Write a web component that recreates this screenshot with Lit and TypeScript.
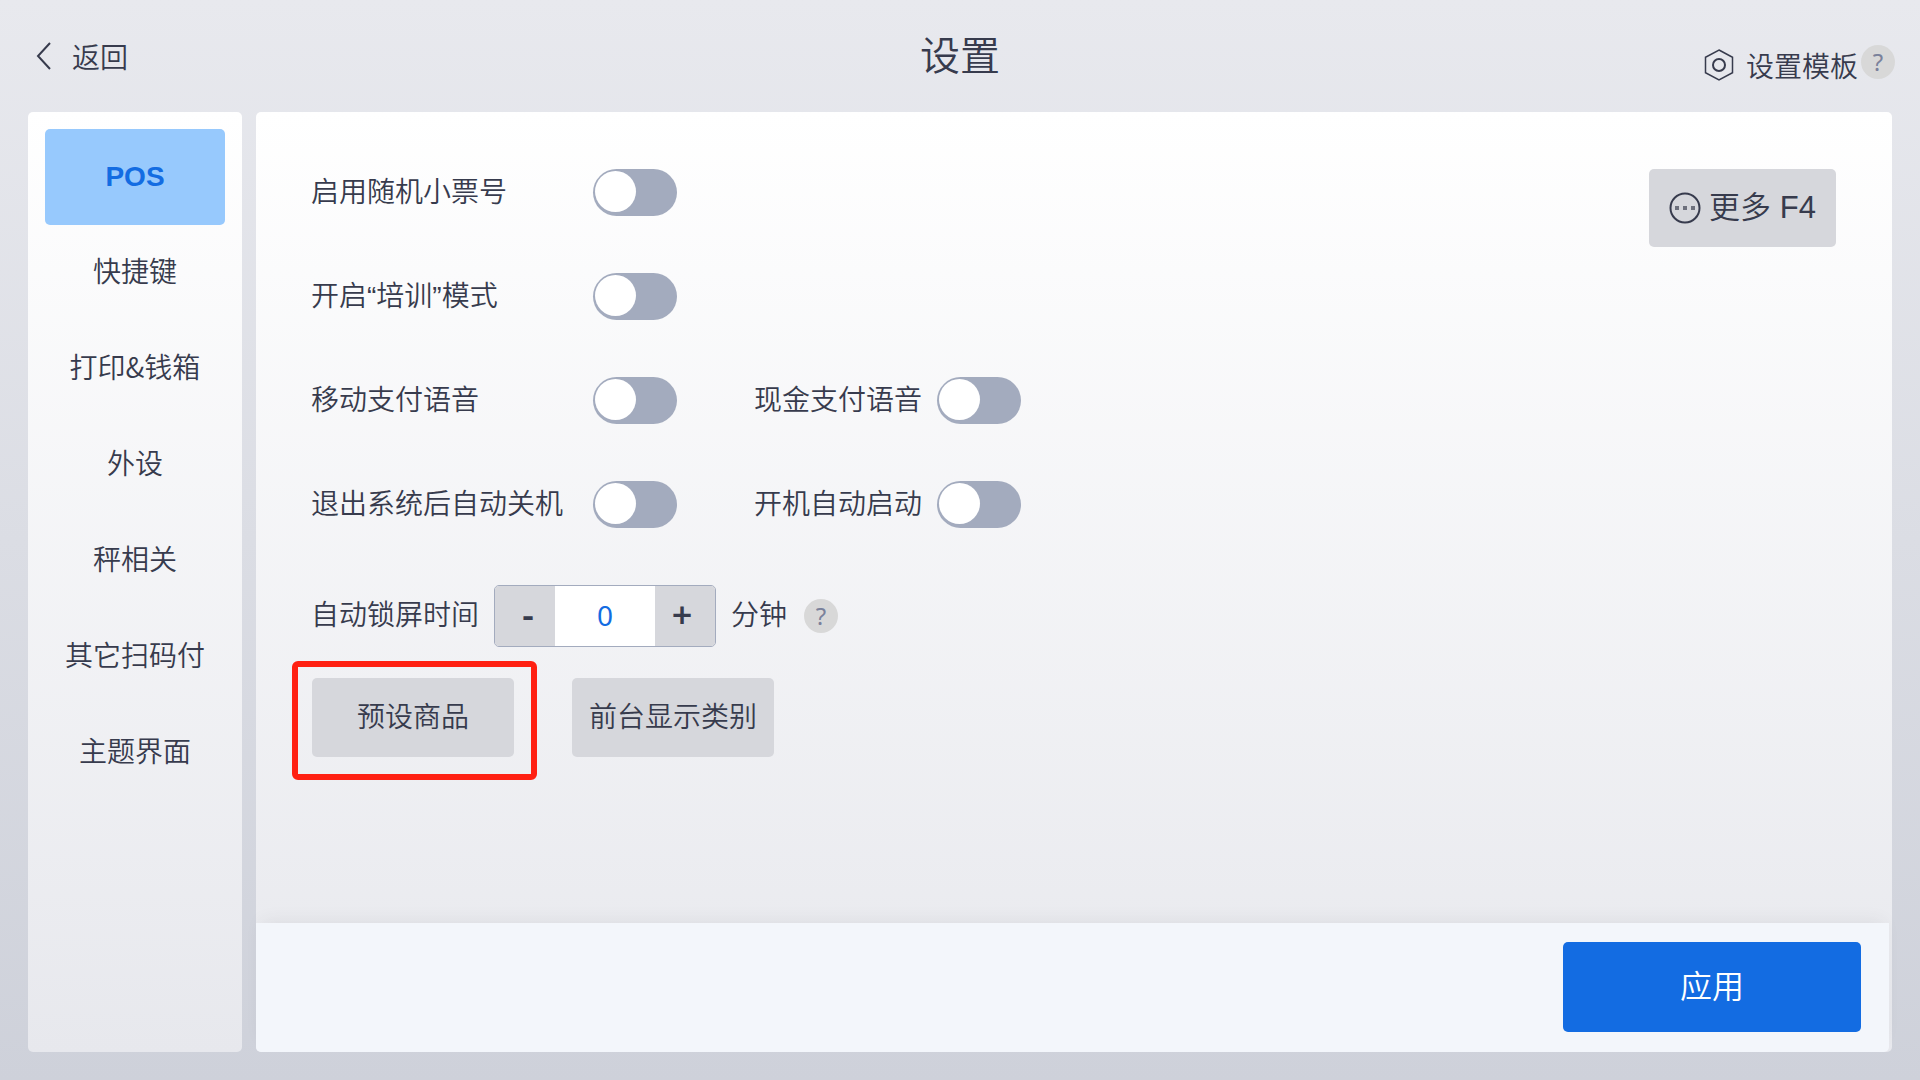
import { LitElement, html, css } from "lit";
import { customElement, property, state } from "lit/decorators.js";
import { classMap } from "lit/directives/class-map.js";

const FONT = css`"Liberation Sans", "Noto Sans CJK SC", sans-serif`;
const CJK_FONT = css`"Noto Sans CJK SC", sans-serif`;

@customElement("toggle-switch")
class ToggleSwitch extends LitElement {
  @property() label = "";
  @property({ type: Boolean }) checked = false;

  static styles = css`
    :host {
      display: contents;
    }
    .label {
      color: #373b4d;
      font: 350 28px/48px ${FONT};
      white-space: nowrap;
    }
    .switch {
      appearance: none;
      box-sizing: border-box;
      flex: none;
      width: 84px;
      height: 47px;
      margin: 0;
      padding: 2px;
      border-radius: 24px;
      background: #a3abbe;
      cursor: pointer;
    }
    .switch::before {
      content: "";
      display: block;
      width: 41px;
      height: 41px;
      border-radius: 50%;
      background: #fff;
    }
    .switch:checked {
      background: #136ce2;
    }
    .switch:checked::before {
      margin-left: auto;
    }
  `;

  render() {
    return html`
      <label class="label" for="switch">${this.label}</label>
      <input
        class="switch"
        id="switch"
        type="checkbox"
        role="switch"
        .checked=${this.checked}
        @change=${(e: Event) => (this.checked = (e.target as HTMLInputElement).checked)}
      />
    `;
  }
}

@customElement("app-root")
class AppRoot extends LitElement {
  @state() private section = "POS";
  @state() private minutes = 0;

  private sections = ["POS", "快捷键", "打印&钱箱", "外设", "秤相关", "其它扫码付", "主题界面"];

  private rows = [
    ["启用随机小票号"],
    ["开启“培训”模式"],
    ["移动支付语音", "现金支付语音"],
    ["退出系统后自动关机", "开机自动启动"],
  ];

  static styles = css`
    :host {
      display: flex;
      flex-direction: column;
      box-sizing: border-box;
      min-height: 100vh;
      padding: 0 28px 28px;
      background: linear-gradient(#e8e9ee, #ced1da);
      color: #373b4d;
      font: 350 28px/40px ${FONT};
    }
    button {
      margin: 0;
      padding: 0;
      border: 0;
      border-radius: 5px;
      background: #d6d7dc;
      color: inherit;
      font: inherit;
      cursor: pointer;
    }
    svg {
      display: block;
      flex: none;
      fill: none;
      stroke: currentColor;
      stroke-width: 2;
    }

    .header {
      display: grid;
      grid-template-columns: 1fr auto 1fr;
      align-items: center;
      height: 112px;
    }
    .back {
      display: flex;
      align-items: center;
      justify-self: start;
      gap: 21px;
      padding-left: 8px;
      color: inherit;
      font-family: ${CJK_FONT};
      text-decoration: none;
    }
    .title {
      margin: 0;
      font-size: 40px;
      font-weight: 350;
      line-height: 56px;
    }
    .template {
      display: flex;
      align-items: center;
      justify-self: end;
      gap: 3px;
      margin: 18px -3px 0 0;
    }
    .template-link {
      display: flex;
      align-items: center;
      gap: 12px;
      background: none;
      font-family: ${CJK_FONT};
    }
    .template .help {
      margin-bottom: 6px;
    }
    .help {
      width: 34px;
      height: 34px;
      border-radius: 50%;
      background: #d8d8d8;
      color: #7a819b;
      font: 24px/32px "Noto Sans", sans-serif;
    }

    .body {
      display: flex;
      flex: 1;
      gap: 14px;
    }
    .nav {
      flex: none;
      box-sizing: border-box;
      width: 214px;
      padding: 17px;
      border-radius: 5px;
      background: linear-gradient(#fff, #e7e8ed);
    }
    .nav-item {
      display: block;
      width: 100%;
      height: 96px;
      padding-bottom: 6px;
      background: none;
      font-family: ${CJK_FONT};
    }
    .nav-item.active {
      padding: 0;
      background: #97c9fd;
      color: #136ce2;
      font-family: ${FONT};
      font-weight: 700;
    }

    .panel {
      display: flex;
      flex: 1;
      flex-direction: column;
      min-width: 0;
      border-radius: 5px;
      background: linear-gradient(#fff, #e7e8ed);
    }
    .content {
      display: flex;
      flex: 1;
      align-items: flex-start;
      justify-content: space-between;
      padding: 57px 56px 57px 55px;
    }
    .more {
      display: flex;
      align-items: center;
      justify-content: center;
      gap: 8px;
      width: 187px;
      height: 78px;
      font-size: 31px;
    }
    .toggles {
      display: grid;
      grid-template-columns: 282px 84px auto;
      grid-auto-rows: 47px;
      row-gap: 57px;
      justify-content: start;
    }
    .row {
      display: contents;
    }
    .second {
      display: flex;
      gap: 15px;
      margin-left: 77px;
    }
    .lock {
      display: flex;
      align-items: center;
      gap: 15px;
      margin-top: 57px;
    }
    .lock .help {
      margin-left: 2px;
    }
    .stepper {
      display: flex;
      box-sizing: border-box;
      width: 222px;
      height: 62px;
      border: 1px solid #a3abbe;
      border-radius: 5px;
      overflow: hidden;
    }
    .step {
      width: 60px;
      padding: 0 0 2px 6px;
      border-radius: 0;
      font: 600 36px/56px "Noto Sans", sans-serif;
    }
    .step:last-child {
      padding: 0 6px 2px 0;
    }
    .value {
      flex: 1;
      min-width: 0;
      padding: 0 0 3px;
      border: 0;
      background: #fff;
      color: #136ce2;
      font: 28px/56px "Noto Sans", sans-serif;
      text-align: center;
    }
    .actions {
      display: flex;
      gap: 58px;
      margin: 31px 0 0 1px;
    }
    .action {
      width: 202px;
      height: 79px;
    }
    .marked {
      position: relative;
      display: flex;
    }
    .marked::after {
      content: "";
      position: absolute;
      inset: -17px -23px -23px -20px;
      border: 6px solid #ff2012;
      border-radius: 6px;
      pointer-events: none;
    }
    .footer {
      display: flex;
      justify-content: flex-end;
      margin-right: 3px;
      padding: 19px 28px 20px;
      border-radius: 0 0 5px 5px;
      background: #f3f6fb;
      box-shadow: 0 -8px 16px -6px rgba(60, 60, 70, 0.08);
    }
    .apply {
      width: 298px;
      height: 90px;
      background: #136ce2;
      color: #fff;
      font-size: 32px;
    }
  `;

  render() {
    return html`
      <header class="header">
        <a class="back" href="#">
          <svg width="15" height="28" viewBox="0 0 15 28"><path d="M14 1 2 14l12 13" /></svg>
          返回
        </a>
        <h1 class="title">设置</h1>
        <div class="template">
          <button class="template-link">
            <svg width="30" height="32" viewBox="0 0 30 32">
              <path d="M15 1 28.500 8.300v15.400L15 31 1.500 23.700V8.300z" stroke-width="1.500" />
              <circle cx="15" cy="16" r="6" />
            </svg>
            设置模板
          </button>
          <button class="help" aria-label="设置模板">?</button>
        </div>
      </header>
      <div class="body">
        <nav class="nav">
          ${this.sections.map(
            (name) => html`<button
              class=${classMap({ "nav-item": true, active: name === this.section })}
              @click=${() => (this.section = name)}
            >${name}</button>`
          )}
        </nav>
        <main class="panel">
          <div class="content">
            <div>
              <div class="toggles">
                ${this.rows.map(
                  ([first, second]) => html`<div class="row">
                    <toggle-switch label=${first}></toggle-switch>
                    <div class="second">
                      ${second ? html`<toggle-switch label=${second}></toggle-switch>` : null}
                    </div>
                  </div>`
                )}
              </div>
              <div class="lock">
                <label for="minutes">自动锁屏时间</label>
                <div class="stepper">
                  <button class="step" @click=${() => (this.minutes = Math.max(0, this.minutes - 1))}>-</button>
                  <input class="value" id="minutes" inputmode="numeric" .value=${String(this.minutes)} />
                  <button class="step" @click=${() => (this.minutes += 1)}>+</button>
                </div>
                <span>分钟</span>
                <button class="help" aria-label="自动锁屏时间">?</button>
              </div>
              <div class="actions">
                <div class="marked"><button class="action">预设商品</button></div>
                <button class="action">前台显示类别</button>
              </div>
            </div>
            <button class="more">
              <svg width="32" height="32" viewBox="0 0 32 32">
                <circle cx="16" cy="16" r="14.500" />
                <path d="M6 16h4m4 0h4m4 0h4" stroke="#6d707c" stroke-width="4" />
              </svg>
              更多 F4
            </button>
          </div>
          <footer class="footer"><button class="apply">应用</button></footer>
        </main>
      </div>
    `;
  }
}
